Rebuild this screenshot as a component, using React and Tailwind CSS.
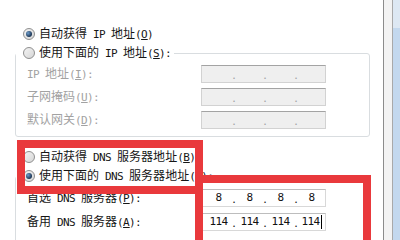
import React from 'react';

const font = "font-['Noto_Sans_CJK_SC',sans-serif]";

// half-width cells like the old bitmap font: every ascii char takes 6px
function sim(text, keyPrefix = '', extra = '') {
  return Array.from(text).map((c, i) =>
    c.charCodeAt(0) < 128 ? (
      <span
        key={keyPrefix + i}
        className={`inline-block w-[6px] text-center font-['DejaVu_Sans_Mono',monospace] text-[11px] ${extra}`}
      >
        {c === ' ' ? '\u00a0' : c}
      </span>
    ) : (
      <span key={keyPrefix + i}>{c}</span>
    )
  );
}

function Radio({ checked }) {
  return (
    <span className="flex h-[12px] w-[12px] shrink-0 items-center justify-center rounded-full border border-[#8f8f8f] bg-gradient-to-br from-[#f4f4f4] to-[#d6d6d6]">
      {checked && (
        <span className="h-[6px] w-[6px] rounded-full bg-[radial-gradient(circle_at_35%_35%,#6d9ccc,#1c3553_70%)]" />
      )}
    </span>
  );
}

function Label({ text, keyChar, tail = '', disabled }) {
  return (
    <span className={`whitespace-nowrap text-[12px] leading-[16px] ${disabled ? 'text-[#a2a2a2]' : 'text-[#161616]'}`}>
      {sim(text, 't')}
      {sim('(', 'a')}
      {sim(keyChar, 'k', 'underline')}
      {sim(')' + tail, 'b')}
    </span>
  );
}

function RadioRow({ checked, text, keyChar, tail, caption }) {
  return (
    <div className={`flex h-[16px] items-center gap-[4px] ${caption ? 'w-fit bg-white pl-[7px] pr-[3px]' : ''}`}>
      <Radio checked={checked} />
      <Label text={text} keyChar={keyChar} tail={tail} />
    </div>
  );
}

function IpField({ values, cursor, disabled }) {
  const parts = values || ['', '', '', ''];
  return (
    <div
      className={`flex h-[18px] w-[125px] items-center border pl-[4px] ${
        disabled
          ? 'border-[#d2d2d2] border-t-[#a3a3a3] bg-[#efefef] text-[#a2a2a2]'
          : 'border-[#d8d8d8] border-t-[#bdbdbd] bg-white text-[#111]'
      }`}
    >
      {parts.map((v, i) => (
        <React.Fragment key={i}>
          <span className="flex w-[25px] items-center justify-center leading-[16px]">
            {sim(v, 'v' + i)}
            {cursor && i === 3 && <span className="ml-[1px] h-[14px] w-[1px] bg-black" />}
          </span>
          {i < 3 && (
            <span className="flex w-[6px] items-center justify-center text-[11px] leading-[16px]">.</span>
          )}
        </React.Fragment>
      ))}
    </div>
  );
}

function FieldRow({ text, keyChar, disabled, values, cursor }) {
  return (
    <div className="grid grid-cols-[174px_125px] items-center">
      <Label text={text} keyChar={keyChar} tail=":" disabled={disabled} />
      <IpField values={values} cursor={cursor} disabled={disabled} />
    </div>
  );
}

export default function App() {
  return (
    <div className={`relative flex h-[240px] w-[400px] overflow-hidden bg-white ${font}`}>
      <div className="w-[383px] shrink-0 pt-[26px]">
        <div className="pl-[23px]">
          <RadioRow checked text="自动获得 IP 地址" keyChar="O" />
        </div>

        <div className="ml-[15px] mt-[11px] w-[355px] rounded-[3px] border border-[#d9dde0] pb-[7px]">
          <div className="-mt-[9px]">
            <RadioRow caption text="使用下面的 IP 地址" keyChar="S" tail=":" />
          </div>
          <div className="mt-[4px] flex flex-col gap-[5px] pl-[11px]">
            <FieldRow disabled text="IP 地址" keyChar="I" />
            <FieldRow disabled text="子网掩码" keyChar="U" />
            <FieldRow disabled text="默认网关" keyChar="D" />
          </div>
        </div>

        <div className="mt-[12px] pl-[23px]">
          <RadioRow text="自动获得 DNS 服务器地址" keyChar="B" />
        </div>

        <div className="ml-[15px] mt-[11px] h-[80px] w-[355px] rounded-[3px] border border-[#d9dde0]">
          <div className="-mt-[9px]">
            <RadioRow caption checked text="使用下面的 DNS 服务器地址" keyChar="E" tail=":" />
          </div>
          <div className="mt-[5px] flex flex-col gap-[6px] pl-[11px]">
            <FieldRow text="首选 DNS 服务器" keyChar="P" values={['8', '8', '8', '8']} />
            <FieldRow text="备用 DNS 服务器" keyChar="A" values={['114', '114', '114', '114']} cursor />
          </div>
        </div>
      </div>

      <div className="flex flex-1 border-l border-[#8c8c8c]">
        <div className="w-[8px] bg-[#f3f3f3]" />
        <div className="flex flex-1 flex-col border-l border-[#a9a9a9]">
          <div className="h-[28px] bg-[#dde8f3]" />
          <div className="flex-1 bg-[#c3d8ee]" />
        </div>
      </div>

      {/* red annotation frames */}
      <div className="absolute left-[17px] top-[140px] h-[54px] w-[186px] border-[8px] border-[#e9393c]" />
      <div className="absolute left-[195px] top-[175px] h-[90px] w-[176px] border-[8px] border-[#e9393c]" />
    </div>
  );
}
